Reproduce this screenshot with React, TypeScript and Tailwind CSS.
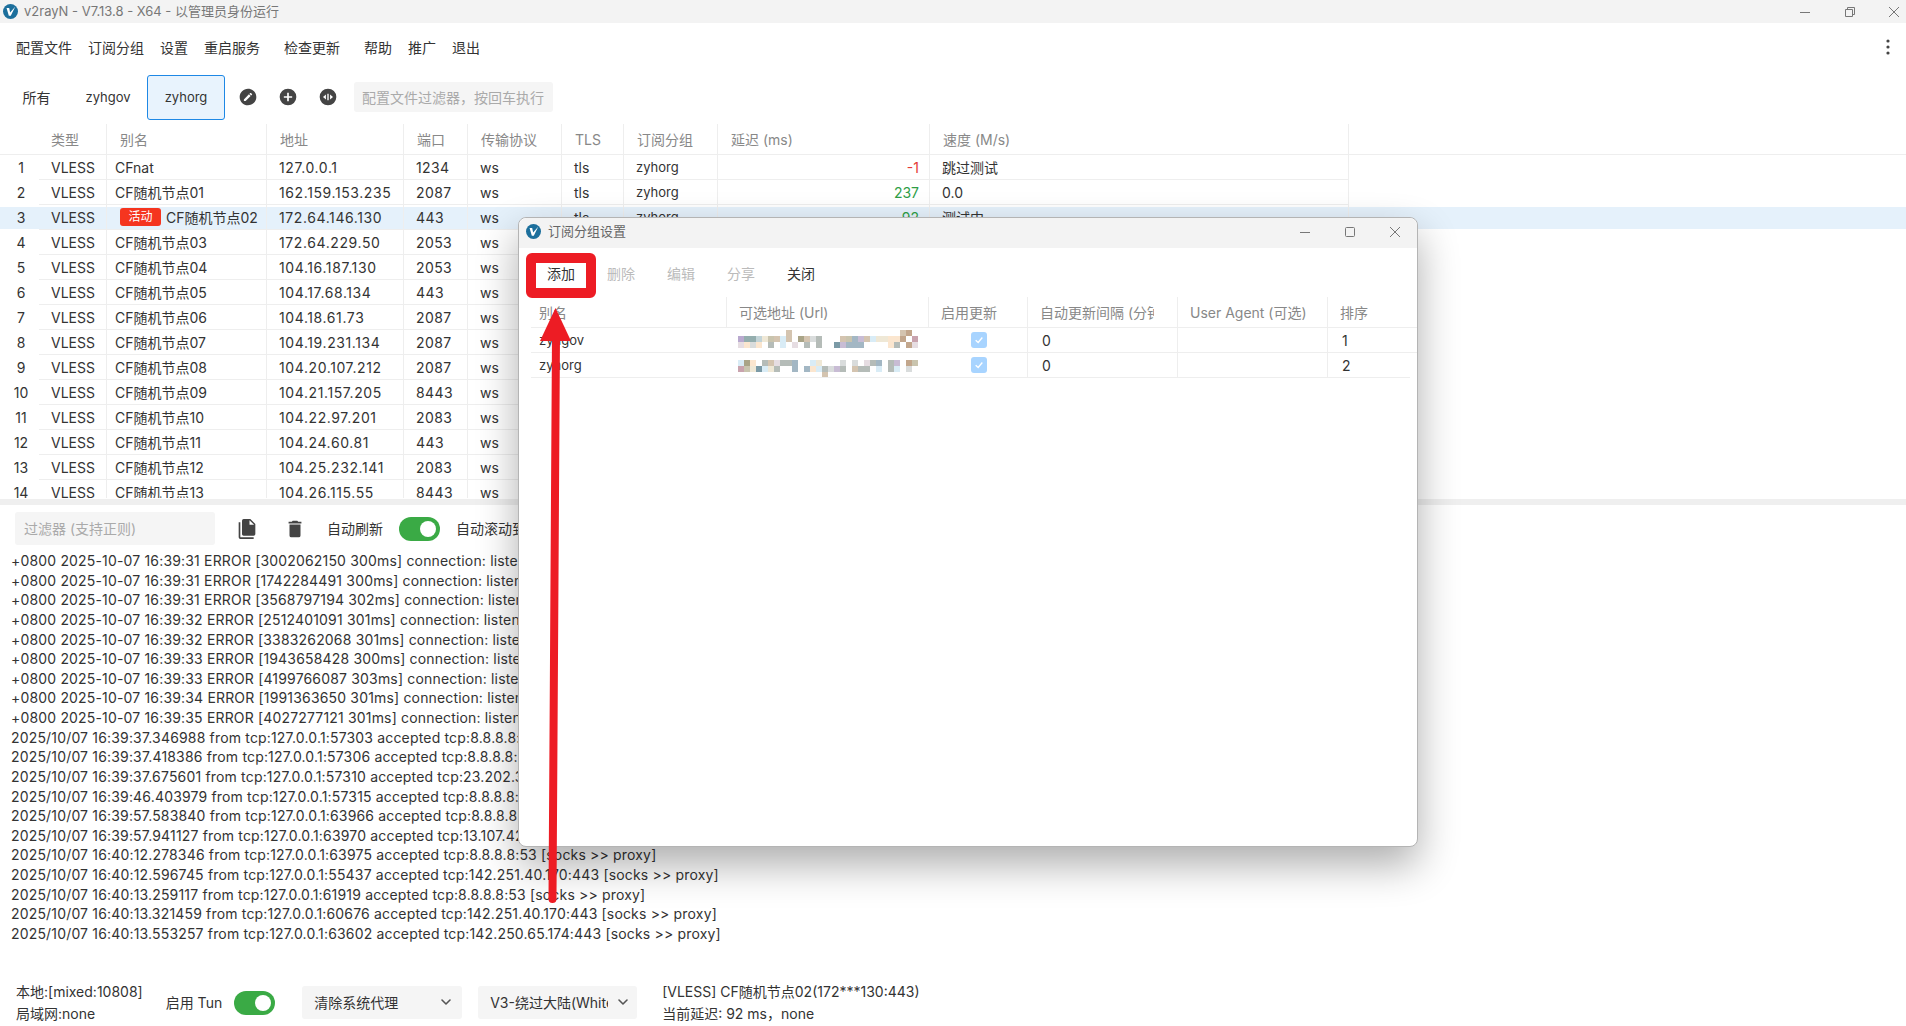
import { ChevronDown } from "lucide-react";

const colW = ["w-[39px]", "w-[68px]", "w-[160px]", "w-[137px]", "w-[64px]", "w-[94px]", "w-[62px]", "w-[94px]", "w-[212px]", "w-[419px]"];

const nodes = [
  ["CFnat", "127.0.0.1", "1234"],
  ["CF随机节点01", "162.159.153.235", "2087"],
  ["CF随机节点02", "172.64.146.130", "443"],
  ["CF随机节点03", "172.64.229.50", "2053"],
  ["CF随机节点04", "104.16.187.130", "2053"],
  ["CF随机节点05", "104.17.68.134", "443"],
  ["CF随机节点06", "104.18.61.73", "2087"],
  ["CF随机节点07", "104.19.231.134", "2087"],
  ["CF随机节点08", "104.20.107.212", "2087"],
  ["CF随机节点09", "104.21.157.205", "8443"],
  ["CF随机节点10", "104.22.97.201", "2083"],
  ["CF随机节点11", "104.24.60.81", "443"],
  ["CF随机节点12", "104.25.232.141", "2083"],
  ["CF随机节点13", "104.26.115.55", "8443"],
];

const logs = [
  "+0800 2025-10-07 16:39:31 ERROR [3002062150 300ms] connection: listener",
  "+0800 2025-10-07 16:39:31 ERROR [1742284491 300ms] connection: listener",
  "+0800 2025-10-07 16:39:31 ERROR [3568797194 302ms] connection: listener",
  "+0800 2025-10-07 16:39:32 ERROR [2512401091 301ms] connection: listener",
  "+0800 2025-10-07 16:39:32 ERROR [3383262068 301ms] connection: listener",
  "+0800 2025-10-07 16:39:33 ERROR [1943658428 300ms] connection: listener",
  "+0800 2025-10-07 16:39:33 ERROR [4199766087 303ms] connection: listener",
  "+0800 2025-10-07 16:39:34 ERROR [1991363650 301ms] connection: listener",
  "+0800 2025-10-07 16:39:35 ERROR [4027277121 301ms] connection: listener",
  "2025/10/07 16:39:37.346988 from tcp:127.0.0.1:57303 accepted tcp:8.8.8.8:53 [socks >> proxy]",
  "2025/10/07 16:39:37.418386 from tcp:127.0.0.1:57306 accepted tcp:8.8.8.8:53 [socks >> proxy]",
  "2025/10/07 16:39:37.675601 from tcp:127.0.0.1:57310 accepted tcp:23.202.34.1:443 [socks >> proxy]",
  "2025/10/07 16:39:46.403979 from tcp:127.0.0.1:57315 accepted tcp:8.8.8.8:53 [socks >> proxy]",
  "2025/10/07 16:39:57.583840 from tcp:127.0.0.1:63966 accepted tcp:8.8.8.8:53 [socks >> proxy]",
  "2025/10/07 16:39:57.941127 from tcp:127.0.0.1:63970 accepted tcp:13.107.42.14:443 [socks >> proxy]",
  "2025/10/07 16:40:12.278346 from tcp:127.0.0.1:63975 accepted tcp:8.8.8.8:53 [socks >> proxy]",
  "2025/10/07 16:40:12.596745 from tcp:127.0.0.1:55437 accepted tcp:142.251.40.170:443 [socks >> proxy]",
  "2025/10/07 16:40:13.259117 from tcp:127.0.0.1:61919 accepted tcp:8.8.8.8:53 [socks >> proxy]",
  "2025/10/07 16:40:13.321459 from tcp:127.0.0.1:60676 accepted tcp:142.251.40.170:443 [socks >> proxy]",
  "2025/10/07 16:40:13.553257 from tcp:127.0.0.1:63602 accepted tcp:142.250.65.174:443 [socks >> proxy]",
];

const blurColors: Record<string, string> = {
  p: "#b9a9cf", t: "#94aeae", b: "#c3d4d8", c: "#efe8d6", k: "#c9c4ae", n: "#d4c4b0", l: "#d9ecf6", o: "#a9a487",
  g: "#b5bcb8", e: "#a3b7c4", v: "#c8bcd4", r: "#c9a3ae", w: "#fbe6cf", i: "#e6dde2", d: "#7b9aa6", m: "#c2a68c", s: "#d9dcdc",
};

const blurA = [
  "........n..................nm.",
  "pttbcknln.onsg...nkevnlccwwm.r",
  "iwsw.g.l.i.g.g..dveee....wg.mi",
];
const blurB = [
  "low.gnigge..lc...s.s.ige.gv.mk",
  "rkcdlcg..e.ewlgsvg.ngg.l.gl.s.",
  "..............n...............",
];

function Mosaic({ rows }: { rows: string[] }) {
  return (
    <svg width="180" height="18" viewBox="0 0 180 18" className="block">
      {rows.map((row, y) =>
        row.split("").map((c, x) =>
          blurColors[c] ? <rect key={`${x}-${y}`} x={x * 6} y={y * 6} width="6" height="6" fill={blurColors[c]} /> : null
        )
      )}
    </svg>
  );
}

function Logo({ size }: { size: number }) {
  return (
    <svg width={size} height={size} viewBox="0 0 16 16" className="shrink-0">
      <circle cx="8" cy="8" r="8" fill="#1c6f9c" />
      <path d="M3.8 4.2 L6.6 4.2 L7.6 9 L13 3 L8.3 12.4 L6.2 12.4 Z" fill="#fff" />
    </svg>
  );
}

function MdiIcon({ d, size = 20, color = "#444" }: { d: string; size?: number; color?: string }) {
  return (
    <svg width={size} height={size} viewBox="0 0 24 24" fill={color}>
      <path d={d} />
    </svg>
  );
}

// window caption glyphs, drawn on a 12px box
function Caption({ kind }: { kind: "min" | "max" | "restore" | "close" }) {
  return (
    <svg width="12" height="12" viewBox="0 0 12 12" fill="none" stroke="#777" strokeWidth="1">
      {kind === "min" && <path d="M1 6.5H11" />}
      {kind === "max" && <rect x="1.5" y="1.5" width="9" height="9" rx="1" />}
      {kind === "restore" && <path d="M1.5 3.5H8.5V10.5H1.5ZM3.5 3.5V1.5H10.5V8.5H8.5" />}
      {kind === "close" && <path d="M1 1L11 11M11 1L1 11" />}
    </svg>
  );
}

function Toggle() {
  return (
    <div className="flex h-[24px] w-[41px] shrink-0 items-center justify-end rounded-full bg-[#3aaa45] pr-[4px]">
      <div className="h-[16px] w-[16px] rounded-full bg-white" />
    </div>
  );
}

function NodeRow({ node, index }: { node: string[]; index: number }) {
  const active = index === 2;
  const delay = index === 0 ? "-1" : index === 1 ? "237" : index === 2 ? "92" : "";
  const speed = index === 0 ? "跳过测试" : index === 1 ? "0.0" : index === 2 ? "测试中" : "";
  const cells = ["VLESS", node[0], node[1], node[2], "ws", "tls", "zyhorg"];
  return (
    <div className={`flex h-[25px] shrink-0 items-center text-[14px] text-[#333] ${active ? "bg-[linear-gradient(#e5f1fb,#e5f1fb)] bg-[length:100%_22px] bg-center bg-no-repeat" : ""}`}>
      <div className={`${colW[0]} pl-[3px] text-center`}>{index + 1}</div>
      <div className="flex h-full items-center border-b border-[#eeeeee]">
        {cells.map((cell, i) => (
          <div
            key={i}
            className={`${colW[i + 1]} flex h-full items-center whitespace-nowrap border-r border-[#eeeeee] ${i === 1 ? "pl-[8px]" : "pl-[12px]"} ${i === 2 ? "tracking-[0.6px]" : ""} ${i === 3 ? "tracking-[0.4px]" : ""} ${i === 6 ? "pt-[1px] text-[13px]" : ""}`}
          >
            {i === 1 && active && (
              <span className="mr-[5px] ml-[5px] flex h-[18px] w-[41px] items-center justify-center rounded-[3px] bg-[#f5351f] text-[12px] text-white">活动</span>
            )}
            {cell}
          </div>
        ))}
        <div className={`${colW[8]} flex h-full items-center justify-end border-r border-[#eeeeee] pr-[10px] ${index === 0 ? "text-[#e53935]" : "text-[#2e9e46]"}`}>{delay}</div>
        <div className={`${colW[9]} flex h-full items-center border-r border-[#eeeeee] pl-[12px]`}>{speed}</div>
      </div>
    </div>
  );
}

function Dialog() {
  const cols = ["w-[196px]", "w-[202px]", "w-[99px]", "w-[150px]", "w-[150px]", "w-[82px]"];
  const heads = ["别名", "可选地址 (Url)", "启用更新", "自动更新间隔 (分钟)", "User Agent (可选)", "排序"];
  const rows = [
    { name: "zyhgov", order: "1", blur: blurA },
    { name: "zyhorg", order: "2", blur: blurB },
  ];
  return (
    <div className="absolute left-[518px] top-[217px] flex h-[630px] w-[900px] flex-col rounded-[8px] border border-[#b4b4b4] bg-white shadow-[0_18px_40px_rgba(0,0,0,0.32)]">
      <div className="flex h-[30px] shrink-0 items-center rounded-t-[8px] bg-[#f3f3f3] pb-[3px] pl-[7px] text-[13px] text-[#666]">
        <Logo size={15} />
        <span className="ml-[7px]">订阅分组设置</span>
        <div className="ml-auto flex items-center">
          <span className="flex w-[45px] justify-center"><Caption kind="min" /></span>
          <span className="flex w-[45px] justify-center"><Caption kind="max" /></span>
          <span className="flex w-[45px] justify-center"><Caption kind="close" /></span>
        </div>
      </div>
      <div className="relative flex h-[49px] shrink-0 items-center pl-[12px] pt-[2px] text-[14px]">
        <span className="flex w-[60px] justify-center text-[#333]">添加</span>
        <span className="flex w-[60px] justify-center text-[#bbb]">删除</span>
        <span className="flex w-[60px] justify-center text-[#bbb]">编辑</span>
        <span className="flex w-[60px] justify-center text-[#bbb]">分享</span>
        <span className="flex w-[60px] justify-center text-[#333]">关闭</span>
        <div className="absolute left-[7px] top-[5px] h-[45px] w-[70px] rounded-[6px] border-[10px] border-[#ed1c24]" />
      </div>
      <div className="ml-[12px] flex h-[30px] shrink-0 items-center text-[14px] text-[#888]">
        {heads.map((h, i) => (
          <div key={h} className={`${cols[i]} flex h-full items-center overflow-hidden whitespace-nowrap border-r border-[#eeeeee] ${i === 0 ? "pl-[8px]" : "pl-[12px]"} ${i === 5 ? "border-r-0" : ""}`}>
            <span className={i === 3 ? "w-[114px] overflow-hidden" : i === 4 ? "w-[125px] overflow-hidden" : ""}>{h}</span>
          </div>
        ))}
      </div>
      {rows.map((r, idx) => (
        <div key={r.name} className="ml-[12px] flex h-[25px] shrink-0 items-center border-t border-[#eeeeee] text-[14px] text-[#333]">
          <div className={`${cols[0]} pl-[8px] pt-[1px] text-[13px]`}>{r.name}</div>
          <div className={`${cols[1]} flex h-full items-center bg-white pl-[11px]`}>
            <div className={idx === 0 ? "-mt-[2px]" : "mt-[7px]"}>
              <Mosaic rows={r.blur} />
            </div>
          </div>
          <div className={`${cols[2]} flex h-full items-center justify-center border-r border-[#eeeeee] pl-[2px]`}>
            <div className="flex h-[16px] w-[16px] items-center justify-center rounded-[3px] bg-[#a8d4ff]">
              <svg width="10" height="10" viewBox="0 0 12 12"><path d="M2 6.2 L5 9 L10 3" fill="none" stroke="#fff" strokeWidth="1.6" /></svg>
            </div>
          </div>
          <div className={`${cols[3]} flex h-full items-center border-r border-[#eeeeee] pl-[14px]`}>0</div>
          <div className={`${cols[4]} h-full border-r border-[#eeeeee]`} />
          <div className={`${cols[5]} pl-[14px]`}>{r.order}</div>
        </div>
      ))}
      <div className="ml-[12px] w-[879px] border-t border-[#eeeeee]" />
    </div>
  );
}

export default function App() {
  return (
    <div className="relative flex h-[1026px] w-[1906px] flex-col overflow-hidden bg-white [font-family:Inter,'Noto_Sans_CJK_SC',sans-serif]">
      <div className="flex h-[23px] shrink-0 items-center bg-[#f3f3f3] pl-[3px] text-[13px] text-[#777]">
        <Logo size={15} />
        <span className="ml-[6px]">v2rayN - V7.13.8 - X64 - 以管理员身份运行</span>
        <div className="ml-auto flex items-center">
          <span className="flex w-[45px] justify-center"><Caption kind="min" /></span>
          <span className="flex w-[45px] justify-center"><Caption kind="restore" /></span>
          <span className="ml-[10px] flex w-[24px] justify-center"><Caption kind="close" /></span>
        </div>
      </div>

      <div className="flex h-[48px] shrink-0 items-center pl-[16px] text-[14px] text-[#333]">
        <span>配置文件</span>
        <span className="ml-[16px]">订阅分组</span>
        <span className="ml-[16px]">设置</span>
        <span className="ml-[16px]">重启服务</span>
        <span className="ml-[24px]">检查更新</span>
        <span className="ml-[24px]">帮助</span>
        <span className="ml-[16px]">推广</span>
        <span className="ml-[16px]">退出</span>
        <svg width="20" height="20" viewBox="0 0 20 20" className="ml-auto mr-[8px]" fill="#444">
          <circle cx="10" cy="4" r="1.6" />
          <circle cx="10" cy="10" r="1.6" />
          <circle cx="10" cy="16" r="1.6" />
        </svg>
      </div>

      <div className="mb-[1px] flex h-[52px] shrink-0 items-center text-[14px] text-[#333]">
        <span className="flex w-[73px] justify-center">所有</span>
        <span className="flex w-[70px] justify-center pt-[1px] text-[13px]">zyhgov</span>
        <span className="ml-[4px] flex h-[45px] w-[78px] items-center justify-center rounded-[3px] border border-[#1e88e5] bg-[#e8f3fd] pt-[1px] text-[13px]">zyhorg</span>
        <div className="ml-[13px] flex w-[108px] items-center gap-[20px]">
          <MdiIcon d="M12,2C6.47,2 2,6.47 2,12C2,17.53 6.47,22 12,22C17.53,22 22,17.53 22,12C22,6.47 17.53,2 12,2M15.1,7.07C15.24,7.07 15.38,7.12 15.5,7.23L16.77,8.5C17,8.72 17,9.07 16.77,9.28L15.77,10.28L13.72,8.23L14.72,7.23C14.82,7.12 14.96,7.07 15.1,7.07M13.13,8.81L15.19,10.87L9.13,16.93H7.07V14.87L13.13,8.81Z" />
          <MdiIcon d="M17,13H13V17H11V13H7V11H11V7H13V11H17M12,2A10,10 0 0,0 2,12A10,10 0 0,0 12,22A10,10 0 0,0 22,12A10,10 0 0,0 12,2Z" />
          <MdiIcon d="M12,2A10,10 0 0,0 2,12A10,10 0 0,0 12,22A10,10 0 0,0 22,12A10,10 0 0,0 12,2M9.5,9V15L6,12L9.5,9M14.5,9L18,12L14.5,15V9M11.2,8H12.8V16H11.2V8Z" />
        </div>
        <div className="ml-[8px] flex h-[30px] w-[199px] items-center rounded-[3px] bg-[#f5f5f5] pl-[8px] text-[#aaa]">配置文件过滤器，按回车执行</div>
      </div>

      <div className="flex h-[374px] shrink-0 flex-col overflow-hidden">
        <div className="flex h-[30px] shrink-0 items-center text-[14px] text-[#888]">
          <div className={colW[0]} />
          {["类型", "别名", "地址", "端口", "传输协议", "TLS", "订阅分组", "延迟 (ms)", "速度 (M/s)"].map((h, i) => (
            <div key={h} className={`${colW[i + 1]} flex h-full items-center border-r border-[#eeeeee] ${i === 0 ? "pl-[12px]" : "pl-[13px]"}`}>{h}</div>
          ))}
        </div>
        <div className="flex flex-col border-t border-[#eeeeee]">
          {nodes.map((n, i) => (
            <NodeRow key={n[1]} node={n} index={i} />
          ))}
        </div>
      </div>

      <div className="mt-[1px] h-[6px] shrink-0 bg-[#efefef]" />

      <div className="flex h-[45px] shrink-0 items-center pt-[2px] text-[14px] text-[#333]">
        <div className="ml-[15px] flex h-[33px] w-[200px] items-center rounded-[3px] bg-[#f5f5f5] pl-[9px] text-[#aaa]">过滤器 (支持正则)</div>
        <div className="ml-[22px]">
          <MdiIcon size={20} d="M15,7H20.5L15,1.5V7M8,0H16L22,6V18A2,2 0 0,1 20,20H8C6.89,20 6,19.1 6,18V2A2,2 0 0,1 8,0M4,4V22H20V24H4A2,2 0 0,1 2,22V4H4Z" />
        </div>
        <div className="ml-[27px]">
          <MdiIcon size={22} d="M19,4H15.5L14.5,3H9.5L8.5,4H5V6H19M6,19A2,2 0 0,0 8,21H16A2,2 0 0,0 18,19V7H6V19Z" />
        </div>
        <span className="ml-[21px]">自动刷新</span>
        <div className="ml-[16px]"><Toggle /></div>
        <span className="ml-[16px] whitespace-nowrap">自动滚动到底部</span>
      </div>

      <div className="flex flex-col pl-[11px] pt-[1px] text-[14px] tracking-[0.17px] text-[#333]">
        {logs.map((line, i) => (
          <div key={i} className="h-[19.63px] whitespace-nowrap leading-[19.63px]">{line}</div>
        ))}
      </div>

      <div className="mt-auto flex h-[48px] shrink-0 items-center text-[14px] text-[#333]">
        <div className="ml-[16px] flex flex-col gap-[3px] leading-[19px]">
          <span>本地:[mixed:10808]</span>
          <span>局域网:none</span>
        </div>
        <span className="ml-[23px]">启用 Tun</span>
        <div className="ml-[12px] mt-[1px]"><Toggle /></div>
        <div className="ml-[27px] flex h-[33px] w-[160px] items-center justify-between rounded-[3px] bg-[#f5f5f5] pl-[12px] pr-[8px]">
          <span>清除系统代理</span>
          <ChevronDown size={16} color="#555" strokeWidth={2.4} />
        </div>
        <div className="ml-[16px] flex h-[33px] w-[159px] items-center justify-between rounded-[3px] bg-[#f5f5f5] pl-[12px] pr-[6px]">
          <span className="w-[118px] overflow-hidden whitespace-nowrap">V3-绕过大陆(Whitelist)</span>
          <ChevronDown size={16} color="#555" strokeWidth={2.4} />
        </div>
        <div className="ml-[25px] flex flex-col gap-[3px] leading-[19px]">
          <span>[VLESS] CF随机节点02(172***130:443)</span>
          <span>当前延迟: 92 ms，none</span>
        </div>
      </div>

      <Dialog />

      <svg className="pointer-events-none absolute left-0 top-0" width="1906" height="1026" viewBox="0 0 1906 1026">
        <line x1="552.5" y1="899" x2="556" y2="335" stroke="#ed1c24" strokeWidth="8" strokeLinecap="round" />
        <polygon points="555.5,308 571,341 540,341" fill="#ed1c24" />
      </svg>
    </div>
  );
}
